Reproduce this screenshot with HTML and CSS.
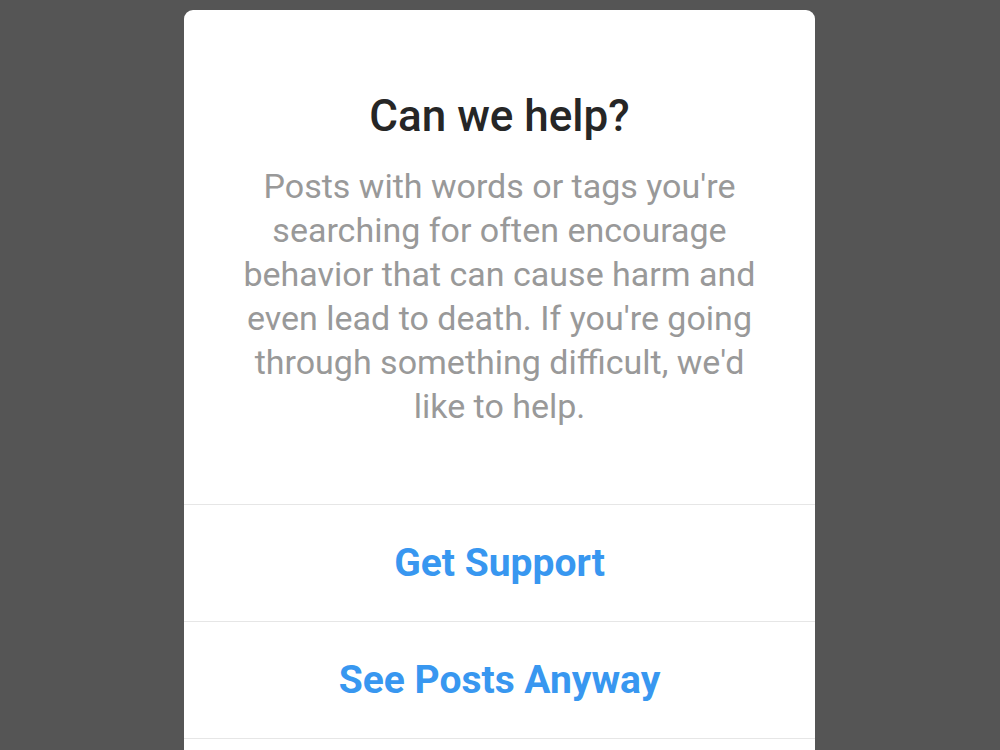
FILE: index.html
```html
<!DOCTYPE html>
<html>
<head>
<meta charset="utf-8">
<link rel="stylesheet" href="styles.css">
</head>
<body>
<div class="screen">
  <div class="dialog">
    <div class="content">
      <h1 class="title">Can we help?</h1>
      <p class="message">Posts with words or tags you're searching for often encourage behavior that can cause harm and even lead to death. If you're going through something difficult, we'd like to help.</p>
    </div>
    <div class="action">Get Support</div>
    <div class="action">See Posts Anyway</div>
    <div class="action"></div>
  </div>
</div>
</body>
</html>
```
FILE: styles.css
```css
html, body {
  margin: 0;
  padding: 0;
  height: 100%;
  overflow: hidden;
}
body {
  background: #555555;
  font-family: Roboto, "Noto Sans", sans-serif;
}
.screen {
  display: flex;
  justify-content: center;
  padding-top: 10px;
}
.dialog {
  width: 631px;
  margin-left: -1px;
  background: #ffffff;
  border-radius: 9px 9px 0 0;
  min-height: 800px;
}
.content {
  padding: 88px 54px 76px;
  text-align: center;
}
.title {
  margin: 0;
  font-size: 44px;
  line-height: 36px;
  font-weight: 500;
  color: #262626;
}
.message {
  margin: 30px 0 0;
  font-size: 34px;
  line-height: 44px;
  color: #999999;
}
.action {
  border-top: 1px solid #e6e6e6;
  height: 116px;
  display: flex;
  align-items: center;
  justify-content: center;
  font-size: 39px;
  font-weight: 700;
  color: #3897f0;
}
```
